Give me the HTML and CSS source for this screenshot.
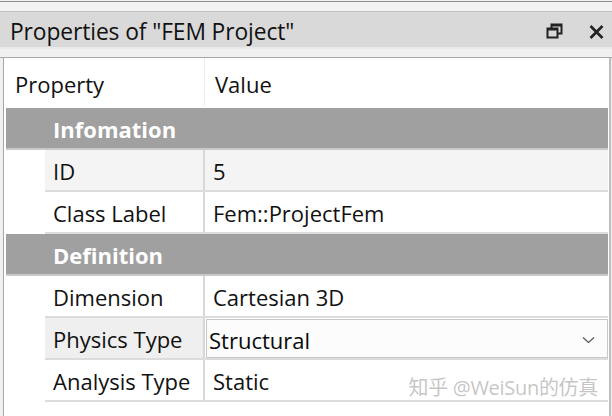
FILE: index.html
```html
<!DOCTYPE html>
<html>
<head>
<meta charset="utf-8">
<link rel="stylesheet" href="styles.css">
</head>
<body>
<div class="top"></div>
<div class="titlebar">
  <span class="title">Properties of "FEM Project"</span>
  <div class="icons">
    <svg class="ico-restore" width="17" height="16" viewBox="0 0 17 16">
      <path d="M5.5 5V1.5H15.5V10.5H11.5" fill="none" stroke="#222" stroke-width="2"/>
      <rect x="1.5" y="5.5" width="10" height="9" fill="none" stroke="#222" stroke-width="2"/>
      <rect x="1.5" y="5" width="10" height="2.5" fill="#222"/>
      <rect x="5.5" y="1" width="10" height="2.5" fill="#222"/>
    </svg>
    <svg class="ico-close" width="15" height="14" viewBox="0 0 15 14">
      <path d="M1.5 1L13.5 13M13.5 1L1.5 13" stroke="#222" stroke-width="2.6"/>
    </svg>
  </div>
</div>
<div class="gap"></div>
<div class="panel">
  <div class="head">
    <div class="hcell hprop">Property</div>
    <div class="hcell hval">Value</div>
  </div>
  <div class="spacer"></div>
  <div class="group">Infomation</div>
  <div class="row alt">
    <div class="lab">ID</div>
    <div class="val">5</div>
  </div>
  <div class="row">
    <div class="lab">Class Label</div>
    <div class="val">Fem::ProjectFem</div>
  </div>
  <div class="group">Definition</div>
  <div class="row">
    <div class="lab">Dimension</div>
    <div class="val">Cartesian 3D</div>
  </div>
  <div class="row">
    <div class="lab sel">Physics Type</div>
    <div class="val combo">
      <span>Structural</span>
      <svg class="chev" width="13" height="8" viewBox="0 0 13 8">
        <path d="M1 1.5L6.5 6.5L12 1.5" fill="none" stroke="#555" stroke-width="1.2"/>
      </svg>
    </div>
  </div>
  <div class="row">
    <div class="lab">Analysis Type</div>
    <div class="val">Static</div>
    <div class="wm">知乎 @WeiSun的仿真</div>
  </div>
</div>
</body>
</html>
```

FILE: styles.css
```css
* { box-sizing: border-box; }
html, body {
  margin: 0;
  padding: 0;
  width: 612px;
  height: 416px;
  overflow: hidden;
  background: #f0f0f0;
  font-family: "Open Sans", "Noto Sans", "Noto Sans CJK SC", sans-serif;
  color: #111;
}
.top {
  height: 11px;
  margin-top: 1px;
  border-top: 1px solid #8e8e8e;
  border-bottom: 1px solid #c2c2c2;
  background: #f2f2f2;
}
.titlebar {
  height: 37px;
  background: #d9d9d9;
  border-bottom: 2px solid #e9e9e9;
  display: flex;
  align-items: center;
  justify-content: space-between;
  padding-left: 10px;
  padding-right: 8px;
}
.title {
  font-size: 22.8px;
  letter-spacing: -0.1px;
  color: #111;
  margin-top: 3px;
}
.icons {
  display: flex;
  align-items: center;
  gap: 26px;
  margin-top: 2px;
}
.ico-close { margin-top: 2px; }
.gap {
  height: 9px;
  background: #f0f0f0;
  border-bottom: 1px solid #a8a8a8;
}
.panel {
  margin-left: 3px;
  margin-right: 1px;
  height: 358px;
  overflow: hidden;
  background: #fff;
  border-left: 1px solid #a6a6a6;
  border-right: 2px solid #bdbdbd;
  padding-left: 2px;
  padding-right: 1px;
  position: relative;
}
.head {
  height: 48px;
  display: flex;
  align-items: center;
  font-size: 22px;
}
.hcell { height: 100%; display: flex; align-items: center; padding-top: 4px; }
.hprop {
  width: 199px;
  padding-left: 9px;
  border-right: 1px solid #ececec;
}
.hval { padding-left: 10px; }
.spacer { height: 2px; }
.group {
  height: 42px;
  background: #a0a0a0;
  border-bottom: 2px solid #c9c9c9;
  color: #fff;
  font-weight: 700;
  font-size: 22px;
  display: flex;
  align-items: center;
  padding-left: 47px;
  padding-top: 2px;
  position: relative;
}
.row {
  margin-left: 39px;
  height: 42px;
  display: flex;
  border-bottom: 2px solid #dcdcdc;
  font-size: 22px;
  position: relative;
}
.row.alt { background: #f4f4f4; }
.lab {
  width: 160px;
  padding-left: 8px;
  padding-top: 2px;
  display: flex;
  align-items: center;
  border-right: 2px solid #d8d8d8;
}
.lab.sel { background: #efefef; }
.val {
  flex: 1;
  display: flex;
  align-items: center;
  padding-left: 8px;
  padding-top: 2px;
}
.combo {
  margin-left: 1px;
  margin-top: 1px;
  padding-left: 2px;
  padding-right: 12px;
  border: 1px solid #c8c8c8;
  background: #fcfcfc;
  justify-content: space-between;
  color: #0a0a0a;
}
.chev { margin-top: 1px; }
.wm {
  position: absolute;
  right: 10px;
  top: 12px;
  font-size: 20px;
  color: rgba(140, 140, 140, 0.5);
  letter-spacing: -0.3px;
}
```
